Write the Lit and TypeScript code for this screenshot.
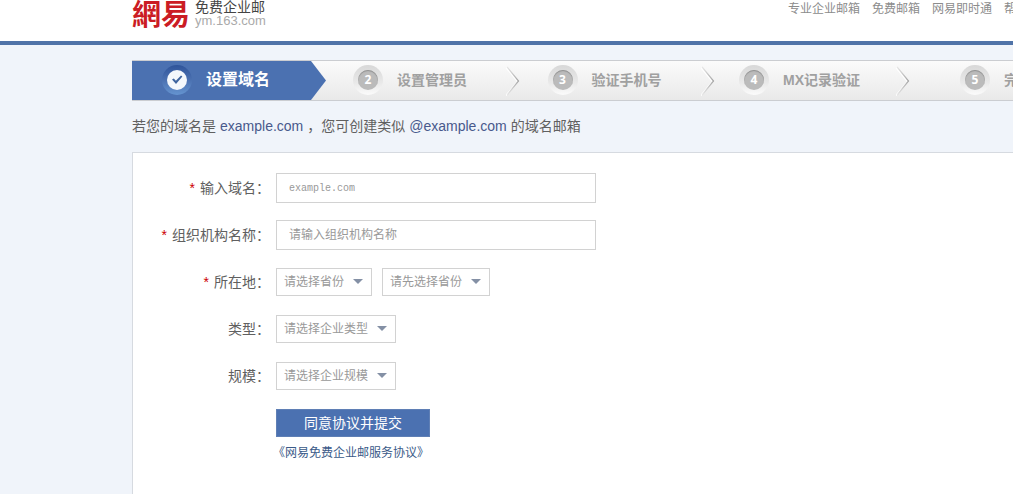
import { LitElement, html, css } from "lit";
import { customElement, property } from "lit/decorators.js";

@customElement("step-item")
class StepItem extends LitElement {
  @property({ type: Number }) number = 1;
  @property() label = "";
  @property({ type: Boolean, reflect: true }) active = false;
  @property({ type: Boolean, reflect: true }) last = false;

  static styles = css`
    :host {
      display: grid;
      grid-template-columns: 1fr 16px;
      height: 39px;
      color: #a0a0a0;
    }
    :host([last]) {
      grid-template-columns: 1fr;
    }
    :host([active]) {
      color: #fff;
      background: #4b71b1;
      clip-path: polygon(0 0, calc(100% - 15px) 0, 100% 50%, calc(100% - 15px) 100%, 0 100%);
    }
    .body {
      display: flex;
      align-items: center;
      justify-content: center;
      gap: 14px;
      padding: 0 10px 2px 0;
    }
    .name {
      font-size: 14px;
      line-height: 20px;
      font-weight: 700;
      white-space: nowrap;
    }
    :host([active]) .name {
      font-size: 16px;
    }
    .badge {
      flex: none;
      box-sizing: border-box;
      width: 30px;
      height: 30px;
      padding: 5px;
      border-radius: 50%;
      background: linear-gradient(#d8d8d8, #e9e9e9 60%, #fbfbfb);
    }
    :host([active]) .badge {
      background: linear-gradient(#2f549a, #4b71b1 50%, #6594d0);
    }
    .disc {
      display: flex;
      align-items: center;
      justify-content: center;
      width: 20px;
      height: 20px;
      border-radius: 50%;
      background: #bbb;
      box-shadow: inset 0 1px 1px #8f8f8f;
      color: #fff;
      font: 700 12px/20px "Open Sans", "Liberation Sans", sans-serif;
    }
    :host([active]) .disc {
      background: #f4f8fc;
      box-shadow: none;
    }
    .divider {
      display: block;
      align-self: center;
      justify-self: end;
    }
  `;

  render() {
    return html`
      <div class="body">
        <span class="badge"
          ><span class="disc"
            >${this.active
              ? html`<svg width="12" height="12" viewBox="0 0 12 12" aria-hidden="true">
                  <path d="M1 5.4 L2.8 4.6 L4.9 6.8 L10 1.6 L11.4 2.4 L5 10 Z" fill="#3f659f" />
                </svg>`
              : this.number}</span
          ></span
        >
        <span class="name">${this.label}</span>
      </div>
      ${this.active || this.last
        ? null
        : html`<svg class="divider" width="14" height="30" viewBox="0 0 14 30" aria-hidden="true">
            <defs>
              <linearGradient id="fade" x1="0" y1="0" x2="1" y2="0">
                <stop offset="0" stop-color="#b4b4b4" stop-opacity="0.25" />
                <stop offset="1" stop-color="#a2a2a2" />
              </linearGradient>
            </defs>
            <path d="M0 1.5 L11.5 15.5 L0 29.5" fill="none" stroke="#fff" stroke-width="1.5" />
            <path d="M1 1 L12.5 15 L1 29" fill="none" stroke="url(#fade)" stroke-width="1.2" />
          </svg>`}
    `;
  }
}

@customElement("app-root")
class AppRoot extends LitElement {
  static styles = css`
    :host {
      display: flex;
      flex-direction: column;
      min-height: 100vh;
      overflow: hidden;
      background: #f0f4fa;
      color: #606060;
      font: 14px/20px "Liberation Sans", "Noto Sans CJK SC", sans-serif;
    }
    a {
      color: inherit;
      text-decoration: none;
    }
    .header {
      background: #fff;
      border-bottom: 4px solid #5073a8;
      padding-left: 132px;
    }
    .bar {
      display: flex;
      justify-content: space-between;
      align-items: flex-start;
      min-width: 960px;
      height: 41px;
    }
    .logo {
      display: flex;
      gap: 5px;
      white-space: nowrap;
    }
    .mark {
      color: #cb1c24;
      font: 700 29px/24px "Noto Sans CJK TC", sans-serif;
    }
    .brand {
      display: grid;
      color: #444;
      line-height: 14px;
    }
    .site {
      color: #aaa;
      font-size: 13px;
    }
    .nav {
      display: flex;
      gap: 12px;
      padding-right: 64px;
      color: #8c8c8c;
      font-size: 12px;
      line-height: 18px;
      white-space: nowrap;
    }
    .main {
      flex: 1;
      display: flex;
      flex-direction: column;
      padding: 15px 0 0 132px;
    }
    .steps {
      display: grid;
      grid-template-columns: 194fr 194fr 195fr 195fr 182fr;
      min-width: 960px;
      border: solid #cbcdd1;
      border-width: 1px 0;
      background: linear-gradient(#fbfbfb, #e9e9e9);
    }
    .hint {
      margin: 15px 0 16px;
      white-space: nowrap;
    }
    .domain {
      color: #48598c;
      margin: 0 4px;
    }
    .panel {
      flex: 1;
      min-width: 958px;
      padding: 20px 0;
      border: 1px solid #d6dae0;
      border-bottom: 0;
      background: #fff;
    }
    .form {
      display: grid;
      gap: 17px;
    }
    .row {
      display: grid;
      grid-template-columns: 137px 1fr;
      column-gap: 6px;
      align-items: center;
      min-height: 30px;
    }
    .label {
      text-align: right;
      white-space: nowrap;
    }
    .required {
      color: #c00;
      margin-right: 5px;
    }
    .fields {
      display: flex;
      gap: 10px;
    }
    .text,
    .select {
      box-sizing: border-box;
      border: 1px solid #d2d2d2;
      border-radius: 0;
      background: #fff;
      color: #999;
      font: 12px/16px "Liberation Sans", "Noto Sans CJK SC", sans-serif;
    }
    .text {
      width: 320px;
      height: 30px;
      padding: 0 12px;
    }
    .text::placeholder {
      color: #999;
      opacity: 1;
    }
    .mono {
      font: 10px/16px "Liberation Mono", monospace;
    }
    .select {
      appearance: none;
      height: 28px;
      padding: 0 26px 0 7px;
      background: #fff
        url("data:image/svg+xml,%3Csvg xmlns='http://www.w3.org/2000/svg' width='10' height='5'%3E%3Cpath d='M0 0H10L5 5Z' fill='%238490a5'/%3E%3C/svg%3E")
        no-repeat right 8px top 10px;
    }
    .actions {
      grid-column: 2;
      display: grid;
      justify-items: start;
      gap: 6px;
      padding-top: 1px;
    }
    .submit {
      width: 154px;
      height: 28px;
      padding: 0;
      border: 1px solid #5f7fb5;
      background: #4b71b1;
      color: #fff;
      font: inherit;
    }
    .agreement {
      color: #3a5a88;
      font-size: 12px;
      text-indent: -3px;
    }
  `;

  private renderLabel(id: string, text: string, required = false) {
    return html`<label class="label" for=${id}
      >${required ? html`<span class="required">*</span>` : null}${text}：</label
    >`;
  }

  render() {
    return html`
      <header class="header">
        <div class="bar">
          <a class="logo" href="#">
            <span class="mark">網易</span>
            <span class="brand"><span>免费企业邮</span><span class="site">ym.163.com</span></span>
          </a>
          <nav class="nav">
            <a href="#">专业企业邮箱</a>
            <a href="#">免费邮箱</a>
            <a href="#">网易即时通</a>
            <a href="#">帮助</a>
          </nav>
        </div>
      </header>
      <main class="main">
        <div class="steps">
          <step-item active number="1" label="设置域名"></step-item>
          <step-item number="2" label="设置管理员"></step-item>
          <step-item number="3" label="验证手机号"></step-item>
          <step-item number="4" label="MX记录验证"></step-item>
          <step-item last number="5" label="完成"></step-item>
        </div>
        <p class="hint">
          若您的域名是<span class="domain">example.com</span>，您可创建类似<span class="domain">@example.com</span>的域名邮箱
        </p>
        <section class="panel">
          <form class="form" @submit=${(e: Event) => e.preventDefault()}>
            <div class="row">
              ${this.renderLabel("domain", "输入域名", true)}
              <div class="fields"><input class="text mono" id="domain" placeholder="example.com" /></div>
            </div>
            <div class="row">
              ${this.renderLabel("org", "组织机构名称", true)}
              <div class="fields"><input class="text" id="org" placeholder="请输入组织机构名称" /></div>
            </div>
            <div class="row">
              ${this.renderLabel("province", "所在地", true)}
              <div class="fields">
                <select class="select" id="province"><option>请选择省份</option></select>
                <select class="select" id="city" aria-label="城市"><option>请先选择省份</option></select>
              </div>
            </div>
            <div class="row">
              ${this.renderLabel("type", "类型")}
              <div class="fields"><select class="select" id="type"><option>请选择企业类型</option></select></div>
            </div>
            <div class="row">
              ${this.renderLabel("size", "规模")}
              <div class="fields"><select class="select" id="size"><option>请选择企业规模</option></select></div>
            </div>
            <div class="row">
              <div class="actions">
                <button class="submit" type="submit">同意协议并提交</button>
                <a class="agreement" href="#">《网易免费企业邮服务协议》</a>
              </div>
            </div>
          </form>
        </section>
      </main>
    `;
  }
}
